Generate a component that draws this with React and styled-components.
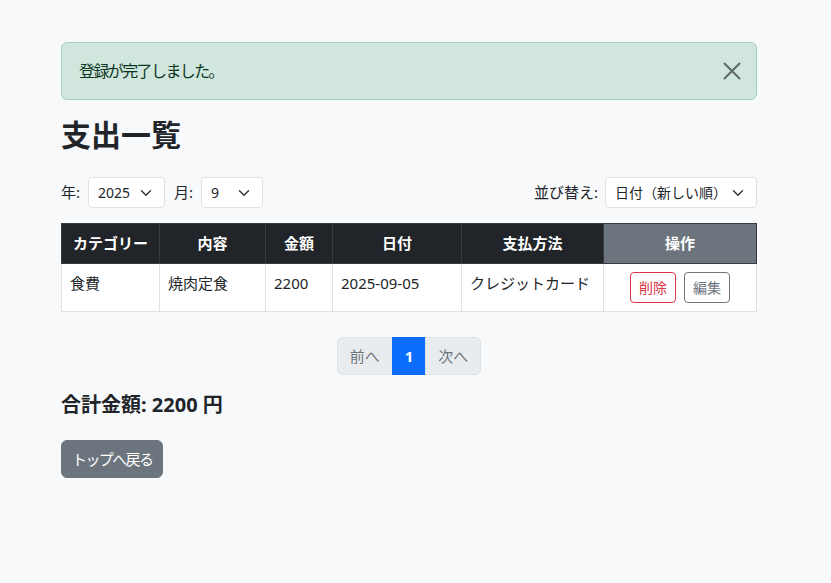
import React from "react";
import styled, { createGlobalStyle } from "styled-components";

const GlobalStyle = createGlobalStyle`
  * { box-sizing: border-box; }
  body {
    margin: 0;
    background: #f8f9fa;
    color: #212529;
    font-family: "Noto Sans", "Noto Sans CJK JP", sans-serif;
    font-size: 16px;
    line-height: 1.5;
  }
`;

const Page = styled.div`
  width: 696px;
  margin-left: 61px;
  padding-top: 42px;
  padding-bottom: 40px;
`;

const Alert = styled.div`
  display: flex;
  align-items: center;
  justify-content: space-between;
  padding: 16px 14px 16px 17px;
  background: #d1e7dd;
  border: 1px solid #a3cfbb;
  border-radius: 6px;
  color: #0a3622;
  margin-bottom: 17px;
  letter-spacing: -1.6px;
`;

const CloseButton = styled.button`
  border: 0;
  background: transparent;
  padding: 0;
  width: 20px;
  height: 20px;
  display: flex;
  align-items: center;
  justify-content: center;
  opacity: 0.55;
  cursor: pointer;
`;

const Title = styled.h2`
  margin: 0 0 24px;
  font-size: 30px;
  font-weight: 700;
  line-height: 1.2;
`;

const FilterBar = styled.div`
  display: flex;
  justify-content: space-between;
  align-items: center;
  margin-bottom: 15px;
`;

const FilterGroup = styled.div`
  display: flex;
  align-items: center;
`;

const Label = styled.span`
  font-size: 15px;
  margin-right: ${(p) => p.$gap || 7}px;
  margin-left: ${(p) => p.$left || 0}px;
`;

const Select = styled.div`
  display: flex;
  align-items: center;
  justify-content: space-between;
  width: ${(p) => p.$width}px;
  height: 31px;
  padding: 0 12px 0 9px;
  background: #fff;
  border: 1px solid #dee2e6;
  border-radius: 4px;
  font-size: 14px;
  color: #212529;
`;

const Table = styled.table`
  width: 100%;
  border-collapse: collapse;
  margin-bottom: 25px;
  background: #fff;
`;

const Th = styled.th`
  background: ${(p) => (p.$secondary ? "#6c757d" : "#212529")};
  color: #fff;
  font-weight: 700;
  font-size: 15px;
  text-align: center;
  padding: 8px;
  border: 1px solid #373b3e;
  width: ${(p) => p.$width}px;
`;

const Td = styled.td`
  padding: 8px;
  border: 1px solid #dee2e6;
  font-size: 15px;
  vertical-align: top;
  text-align: ${(p) => (p.$center ? "center" : "left")};
`;

const Actions = styled.div`
  display: flex;
  justify-content: center;
  gap: 8px;
`;

const SmallButton = styled.button`
  height: 31px;
  padding: 0 8px;
  background: transparent;
  border: 1px solid ${(p) => p.$color};
  color: ${(p) => p.$color};
  border-radius: 4px;
  font-family: inherit;
  font-size: 14px;
  cursor: pointer;
`;

const Pagination = styled.nav`
  display: flex;
  justify-content: center;
  margin-bottom: 18px;
`;

const PageLink = styled.span`
  display: block;
  height: 38px;
  line-height: 36px;
  padding: 0 12px;
  font-size: 15px;
  border: 1px solid ${(p) => (p.$active ? "#0d6efd" : "#dee2e6")};
  background: ${(p) => (p.$active ? "#0d6efd" : "#e9ecef")};
  color: ${(p) => (p.$active ? "#fff" : "#6c757d")};
  font-weight: ${(p) => (p.$active ? 700 : 400)};
  margin-left: -1px;
  &:first-child {
    border-radius: 6px 0 0 6px;
    margin-left: 0;
  }
  &:last-child {
    border-radius: 0 6px 6px 0;
  }
`;

const Total = styled.h5`
  margin: 0 0 23px;
  font-size: 20px;
  font-weight: 700;
  line-height: 1.2;
`;

const BackButton = styled.button`
  height: 38px;
  padding: 0 10px;
  background: #6c757d;
  border: 1px solid #6c757d;
  border-radius: 6px;
  color: #fff;
  font-family: inherit;
  font-size: 15px;
  letter-spacing: -1.6px;
  cursor: pointer;
`;

const Chevron = () => (
  <svg width="12" height="12" viewBox="0 0 16 16" fill="none">
    <path d="m2 5 6 6 6-6" stroke="#343a40" strokeWidth="2" strokeLinecap="round" strokeLinejoin="round" />
  </svg>
);

const columns = [
  { name: "カテゴリー", width: 98 },
  { name: "内容", width: 106 },
  { name: "金額", width: 67 },
  { name: "日付", width: 129 },
  { name: "支払方法", width: 142 },
];

const rows = [
  { category: "食費", content: "焼肉定食", amount: 2200, date: "2025-09-05", method: "クレジットカード" },
];

export default function App() {
  return (
    <>
      <GlobalStyle />
      <Page>
        <Alert>
          <span>登録が完了しました。</span>
          <CloseButton aria-label="閉じる">
            <svg width="18" height="18" viewBox="0 0 18 18">
              <path d="M1 1 17 17M17 1 1 17" stroke="#000" strokeWidth="2" />
            </svg>
          </CloseButton>
        </Alert>

        <Title>支出一覧</Title>

        <FilterBar>
          <FilterGroup>
            <Label $gap={8}>年:</Label>
            <Select $width={77}>
              <span>2025</span>
              <Chevron />
            </Select>
            <Label $left={9} $gap={8}>月:</Label>
            <Select $width={62}>
              <span>9</span>
              <Chevron />
            </Select>
          </FilterGroup>
          <FilterGroup>
            <Label>並び替え:</Label>
            <Select $width={152}>
              <span>日付（新しい順）</span>
              <Chevron />
            </Select>
          </FilterGroup>
        </FilterBar>

        <Table>
          <thead>
            <tr>
              {columns.map((c) => (
                <Th key={c.name} $width={c.width}>{c.name}</Th>
              ))}
              <Th $secondary>操作</Th>
            </tr>
          </thead>
          <tbody>
            {rows.map((r) => (
              <tr key={r.date}>
                <Td>{r.category}</Td>
                <Td>{r.content}</Td>
                <Td>{r.amount}</Td>
                <Td>{r.date}</Td>
                <Td>{r.method}</Td>
                <Td $center>
                  <Actions>
                    <SmallButton $color="#dc3545">削除</SmallButton>
                    <SmallButton $color="#6c757d">編集</SmallButton>
                  </Actions>
                </Td>
              </tr>
            ))}
          </tbody>
        </Table>

        <Pagination>
          <PageLink>前へ</PageLink>
          <PageLink $active>1</PageLink>
          <PageLink>次へ</PageLink>
        </Pagination>

        <Total>合計金額: 2200 円</Total>

        <BackButton>トップへ戻る</BackButton>
      </Page>
    </>
  );
}
